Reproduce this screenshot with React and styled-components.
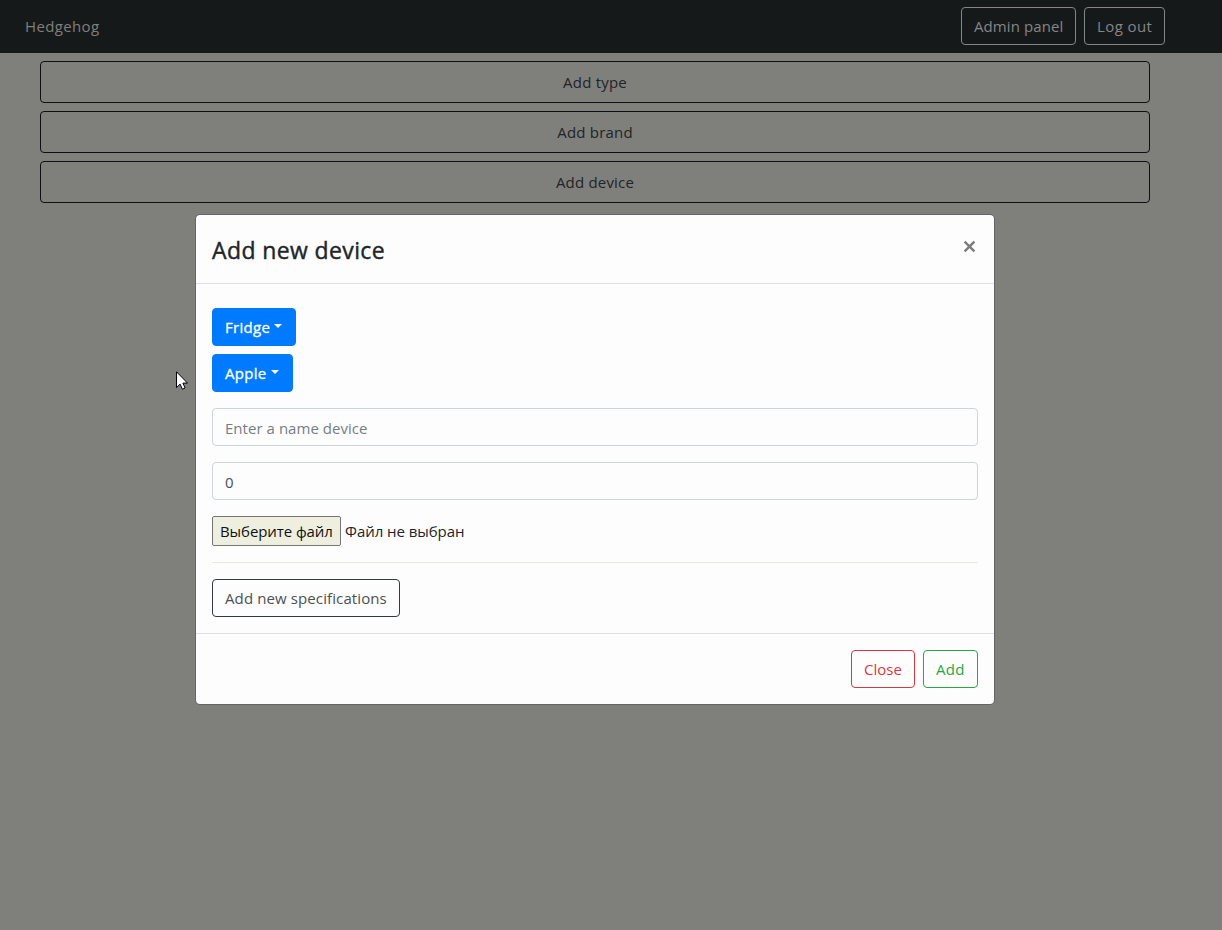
import React from "react";
import styled, { createGlobalStyle } from "styled-components";

const GlobalStyle = createGlobalStyle`
  *, *::before, *::after { box-sizing: border-box; }
  body {
    margin: 0;
    background: #7f7f7c;
    color: #212529;
    font-family: "Open Sans", "Noto Sans", sans-serif;
    font-size: 15px;
    line-height: 24px;
    overflow: hidden;
  }
  button, input { font: inherit; }
`;

const Page = styled.div`
  position: relative;
  height: 930px;
  overflow: hidden;
`;

const Navbar = styled.nav`
  display: flex;
  align-items: center;
  justify-content: space-between;
  height: 53px;
  padding: 0 57px 1px 25px;
  background: #16191a;
`;

const Brand = styled.a`
  color: #7f7f7c;
  letter-spacing: 0.35px;
`;

const NavActions = styled.div`
  display: flex;
  gap: 8px;
`;

const Button = styled.button`
  display: ${(p) => (p.$caret ? "flex" : "block")};
  align-items: center;
  width: ${(p) => p.$width}px;
  height: 38px;
  padding: 0 0 0 12px;
  text-align: left;
  white-space: nowrap;
  color: ${(p) => p.$color};
  background: ${(p) => p.$fill || "transparent"};
  border: 1px solid ${(p) => p.$border || p.$color};
  border-radius: 4px;
  letter-spacing: ${(p) => p.$track || 0}px;
`;

const Caret = styled.span`
  margin: -3px 0 0 4px;
  border-top: 4.8px solid currentColor;
  border-left: 4.8px solid transparent;
  border-right: 4.8px solid transparent;
`;

const AdminList = styled.main`
  display: flex;
  flex-direction: column;
  gap: 8px;
  padding: 8px 72px 0 40px;
`;

const AdminButton = styled.button`
  height: 42px;
  padding: 0;
  color: #222426;
  background: transparent;
  border: 1px solid #0d0f11;
  border-radius: 4px;
  letter-spacing: 0.2px;
`;

const Dialog = styled.section`
  position: absolute;
  top: 214px;
  left: 195px;
  width: 800px;
  background: #fdfdfe;
  background-clip: padding-box;
  border: 1px solid rgba(0, 0, 0, 0.2);
  border-radius: 5px;
`;

const DialogHeader = styled.header`
  display: flex;
  justify-content: space-between;
  height: 69px;
  padding: 18px 18px 0 16px;
  border-bottom: 1px solid #dee2e6;
`;

const DialogTitle = styled.h2`
  margin: -1px 0 0;
  font-size: 23px;
  line-height: 36px;
  font-weight: 500;
  letter-spacing: 0.38px;
  -webkit-text-stroke: 0.4px currentColor;
`;

const Dismiss = styled.button`
  width: 13px;
  height: 26px;
  padding: 0;
  border: 0;
  background: transparent;
  line-height: 0;
`;

const DialogBody = styled.div`
  height: 349px;
  padding: 24px 16px 0;
`;

const Dropdowns = styled.div`
  display: flex;
  flex-direction: column;
  align-items: flex-start;
  gap: 8px;
  -webkit-text-stroke: 0.3px currentColor;
`;

const Field = styled.input`
  display: block;
  width: 100%;
  height: 38px;
  margin-top: 16px;
  padding: 2px 12px 0;
  color: #495057;
  background: #fdfdfe;
  border: 1px solid #ced4da;
  border-radius: 4px;
  letter-spacing: 0.04px;
  &::placeholder { color: #767d84; opacity: 1; }
`;

const FileRow = styled.div`
  display: flex;
  align-items: center;
  gap: 4px;
  height: 30px;
  margin-top: 16px;
`;

const FileButton = styled.button`
  width: 129px;
  height: 30px;
  padding: 0 0 0 7px;
  text-align: left;
  white-space: nowrap;
  color: #111;
  background: #efefe0;
  border: 1px solid #767676;
  border-radius: 2px;
  letter-spacing: -0.08px;
`;

const FileStatus = styled.span`
  letter-spacing: -0.06px;
`;

const Divider = styled.hr`
  height: 1px;
  margin: 16px 0;
  border: 0;
  background: #e8e8dc;
`;

const DialogFooter = styled.footer`
  display: flex;
  justify-content: flex-end;
  gap: 8px;
  height: 71px;
  padding: 16px 16px 0;
  border-top: 1px solid #dee2e6;
`;

const Pointer = styled.svg`
  position: absolute;
  left: 176px;
  top: 371px;
`;

export default function App() {
  return (
    <Page>
      <GlobalStyle />
      <Navbar>
        <Brand>Hedgehog</Brand>
        <NavActions>
          <Button $width={115} $color="#858585" $track={0.1}>Admin panel</Button>
          <Button $width={81} $color="#858585" $track={0.4}>Log out</Button>
        </NavActions>
      </Navbar>
      <AdminList>
        <AdminButton>Add type</AdminButton>
        <AdminButton>Add brand</AdminButton>
        <AdminButton>Add device</AdminButton>
      </AdminList>
      <Dialog role="dialog">
        <DialogHeader>
          <DialogTitle>Add new device</DialogTitle>
          <Dismiss aria-label="Close">
            <svg width="13" height="13" viewBox="0 0 13 13" fill="none" stroke="#7c7c80" strokeWidth="2.4">
              <path d="M1.6 1.6 11.4 11.4M11.4 1.6 1.6 11.4" />
            </svg>
          </Dismiss>
        </DialogHeader>
        <DialogBody>
          <Dropdowns>
            <Button $caret $width={84} $track={0.3} $color="#fff" $fill="#007bff" $border="#007bff">Fridge<Caret /></Button>
            <Button $caret $width={81} $track={0.3} $color="#fff" $fill="#007bff" $border="#007bff">Apple<Caret /></Button>
          </Dropdowns>
          <Field placeholder="Enter a name device" />
          <Field defaultValue="0" />
          <FileRow>
            <FileButton>Выберите файл</FileButton>
            <FileStatus>Файл не выбран</FileStatus>
          </FileRow>
          <Divider />
          <Button $width={188} $track={0.11} $color="#4c5054" $border="#343a40">Add new specifications</Button>
        </DialogBody>
        <DialogFooter>
          <Button $width={64} $color="#dc3545">Close</Button>
          <Button $width={55} $track={0.3} $color="#28a745">Add</Button>
        </DialogFooter>
      </Dialog>
      <Pointer width="12" height="19" viewBox="0 0 12 19">
        <path d="M.5 .8V16.6L4.1 13.1 6.4 18.2 9.1 17 6.9 12.1H11.5Z" fill="#fff" stroke="#000" />
      </Pointer>
    </Page>
  );
}
